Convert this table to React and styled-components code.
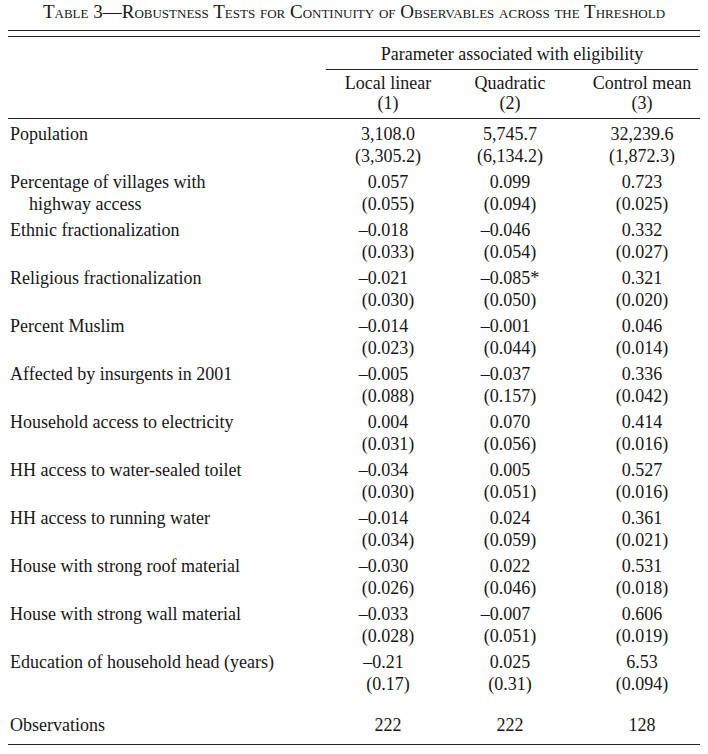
import styled, { createGlobalStyle } from 'styled-components';

const GlobalStyle = createGlobalStyle`
  body {
    margin: 0;
    background: #fff;
  }
`;

const Page = styled.div`
  width: 692px;
  margin: 0 8px;
  font-family: "Liberation Serif", "Times New Roman", serif;
  font-size: 18px;
  color: #161616;
`;

const Caption = styled.div`
  height: 30px;
  line-height: 24px;
  text-align: center;
  font-size: 19px;
  font-variant: small-caps;
  white-space: nowrap;
`;

const DoubleRule = styled.div`
  height: 5px;
  border-top: 1px solid #222;
  border-bottom: 1px solid #222;
`;

const Row = styled.div`
  display: grid;
  grid-template-columns: 318px 124px 120px 130px;
  padding: ${(p) => p.$pad || '2px 0'};
  border-bottom: ${(p) => (p.$rule ? '1px solid #222' : 'none')};
`;

const Spanner = styled.div`
  grid-column: 2 / 5;
  margin-right: 2px;
  line-height: 22px;
  text-align: center;
  padding-bottom: 4px;
  border-bottom: 1px solid #222;
`;

const Label = styled.div`
  padding-left: 2px;
  line-height: 22px;
`;

const Indent = styled.div`
  padding-left: 19px;
`;

const Value = styled.div`
  display: flex;
  flex-direction: column;
  align-items: center;
  padding-left: ${(p) => p.$shift || 0}px;
  line-height: ${(p) => p.$lh || 22}px;
`;

const Num = styled.div`
  display: grid;
  grid-template-columns: 12px auto 12px;
  white-space: nowrap;
`;

const Pre = styled.span`
  text-align: right;
`;

const Post = styled.span`
  text-align: left;
`;

const shifts = [0, 0, 14];

const rows = [
  [['Population'], ['3,108.0', '(3,305.2)'], ['5,745.7', '(6,134.2)'], ['32,239.6', '(1,872.3)']],
  [['Percentage of villages with', 'highway access'], ['0.057', '(0.055)'], ['0.099', '(0.094)'], ['0.723', '(0.025)']],
  [['Ethnic fractionalization'], ['–0.018', '(0.033)'], ['–0.046', '(0.054)'], ['0.332', '(0.027)']],
  [['Religious fractionalization'], ['–0.021', '(0.030)'], ['–0.085*', '(0.050)'], ['0.321', '(0.020)']],
  [['Percent Muslim'], ['–0.014', '(0.023)'], ['–0.001', '(0.044)'], ['0.046', '(0.014)']],
  [['Affected by insurgents in 2001'], ['–0.005', '(0.088)'], ['–0.037', '(0.157)'], ['0.336', '(0.042)']],
  [['Household access to electricity'], ['0.004', '(0.031)'], ['0.070', '(0.056)'], ['0.414', '(0.016)']],
  [['HH access to water-sealed toilet'], ['–0.034', '(0.030)'], ['0.005', '(0.051)'], ['0.527', '(0.016)']],
  [['HH access to running water'], ['–0.014', '(0.034)'], ['0.024', '(0.059)'], ['0.361', '(0.021)']],
  [['House with strong roof material'], ['–0.030', '(0.026)'], ['0.022', '(0.046)'], ['0.531', '(0.018)']],
  [['House with strong wall material'], ['–0.033', '(0.028)'], ['–0.007', '(0.051)'], ['0.606', '(0.019)']],
  [['Education of household head (years)'], ['–0.21', '(0.17)'], ['0.025', '(0.31)'], ['6.53', '(0.094)']],
];

// split "(0.033)" / "–0.018" / "–0.085*" so the number body stays centred
function NumText({ text }) {
  const m = text.match(/^([(–]?)(.*?)([)*]?)$/);
  return (
    <Num>
      <Pre>{m[1]}</Pre>
      <span>{m[2]}</span>
      <Post>{m[3]}</Post>
    </Num>
  );
}

function DataRow({ label, cols }) {
  return (
    <Row>
      <Label>
        {label.map((l, i) => (i === 0 ? <div key={i}>{l}</div> : <Indent key={i}>{l}</Indent>))}
      </Label>
      {cols.map((c, i) => (
        <Value key={i} $shift={shifts[i]}>
          {c.map((t, j) => (
            <NumText key={j} text={t} />
          ))}
        </Value>
      ))}
    </Row>
  );
}

export default function App() {
  return (
    <>
      <GlobalStyle />
      <Page>
        <Caption>Table 3—Robustness Tests for Continuity of Observables across the Threshold</Caption>
        <DoubleRule />
        <Row $pad="6px 0 0">
          <Spanner>Parameter associated with eligibility</Spanner>
        </Row>
        <Row $pad="3px 0 5px" $rule>
          <div />
          {[['Local linear', '(1)'], ['Quadratic', '(2)'], ['Control mean', '(3)']].map((h, i) => (
            <Value key={i} $shift={shifts[i]} $lh={20}>
              <div>{h[0]}</div>
              <div>{h[1]}</div>
            </Value>
          ))}
        </Row>
        <Row $pad="2px 0 0">
          <div />
        </Row>
        {rows.map((r, i) => (
          <DataRow key={i} label={r[0]} cols={r.slice(1)} />
        ))}
        <Row $pad="17px 0 8px" $rule>
          <Label>Observations</Label>
          {['222', '222', '128'].map((v, i) => (
            <Value key={i} $shift={shifts[i]}>
              {v}
            </Value>
          ))}
        </Row>
      </Page>
    </>
  );
}
